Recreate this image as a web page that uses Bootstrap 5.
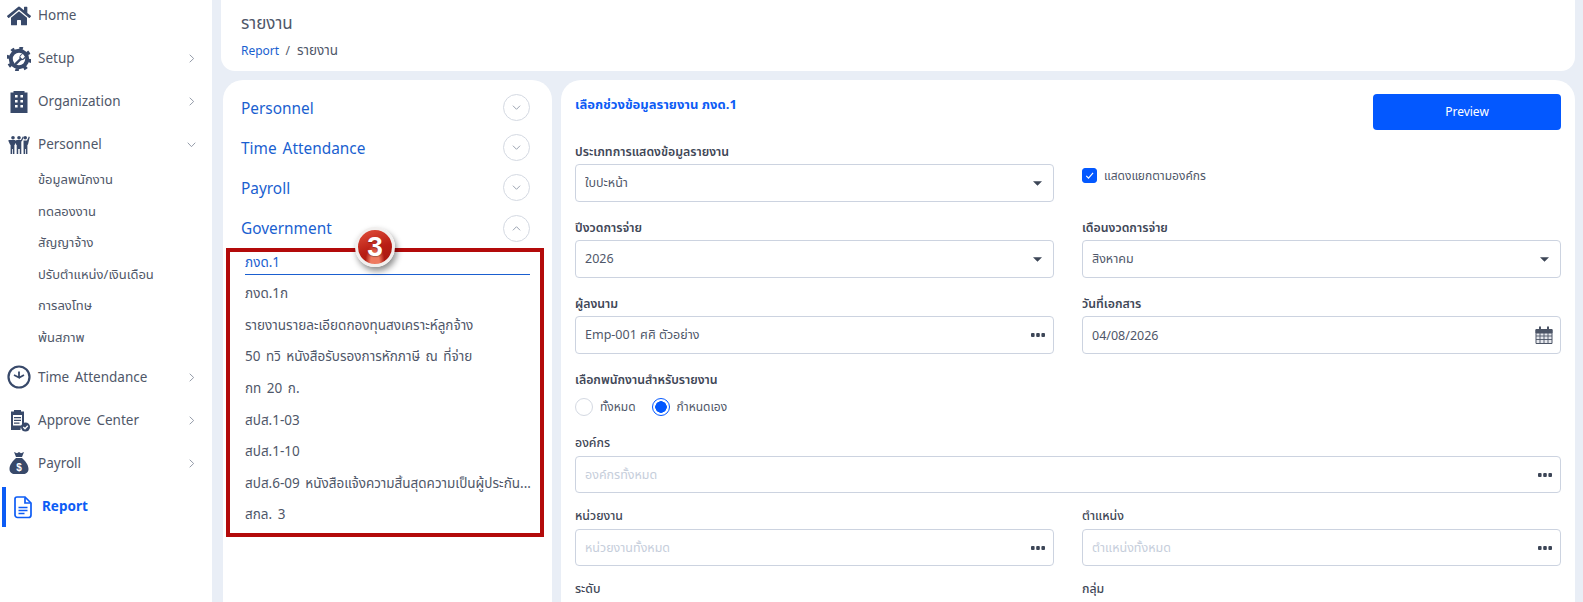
<!DOCTYPE html><html lang="th">
<head>
  <meta charset="UTF-8">
  <meta name="viewport" content="width=device-width, initial-scale=1.0">
  <title>Report</title>
  <link href="https://cdn.jsdelivr.net/npm/bootstrap@5.3.0/dist/css/bootstrap.min.css" rel="stylesheet">
  <style>
    html, body { height: 602px; overflow: hidden; }
    body { background-color: #e9eef6; font-family: "Noto Sans", "Noto Sans Thai", "Noto Sans CJK SC", sans-serif; color: #4f5769; font-size: 13px; }
    .app-shell { height: 602px; }
    .side-bar { width: 212px; flex: none; background: #fff; }
    .side-list { margin-top: -6px; }
    .side-row { height: 43px; padding-left: 7px; padding-right: 16px; color: #4f5769; text-decoration: none; font-size: 13.5px; word-spacing: 2px; }
    .side-ico { width: 24px; height: 24px; flex: none; margin-right: 7px; fill: #38496a; }
    .side-sub { height: 31.6px; padding-left: 38px; font-size: 13px; color: #4f5769; text-decoration: none; }
    .side-sub-first { margin-top: -2px; }
    .side-sub-last { margin-bottom: 2px; }
    .side-chev { margin-left: auto; width: 9px; height: 9px; fill: none; stroke: #8a92a0; stroke-width: 1; }
    .side-active { height: 40px; margin-top: 2px; margin-left: 2px; border-left: 4px solid #0d5cf5; padding-left: 6px; color: #0d5cf5; font-weight: 700; }
    .side-active .side-ico { fill: none; stroke: #0d5cf5; stroke-width: 1.7; margin-right: 8px; width: 22px; }
    .main-col { padding: 0 8px 0 9px; min-width: 0; }
    .head-box { height: 71px; background: #fff; border-radius: 0 0 14px 14px; padding: 11px 20px 0 20px; margin-bottom: 9px; }
    .head-title { font-size: 17px; line-height: 24px; color: #4f5769; }
    .head-crumb { font-size: 12px; line-height: 18px; margin-top: 6px; }
    .head-crumb a { color: #1a5fd0; text-decoration: none; }
    .crumb-now { font-size: 13.5px; margin-left: 4px; }
    .panel-left { width: 329px; flex: none; margin-left: 2px; background: #fff; border-radius: 20px 20px 0 0; padding: 7px 8px 0 3px; }
    .panel-right { flex: 1; min-width: 0; margin-left: 9px; background: #fff; border-radius: 20px 20px 0 0; padding: 14px 14px 0 14px; }
    .group-row { height: 40.3px; padding: 0 14px 0 15px; color: #1a5fd0; font-size: 15.4px; word-spacing: 2px; }
    .group-name { padding-top: 2px; }
    .group-circle { width: 27px; height: 27px; border: 1px solid #d4d9e2; border-radius: 50%; }
    .group-circle svg { width: 9px; height: 9px; fill: none; stroke: #9aa2b0; stroke-width: 1.1; }
    .report-box { border: 4px solid #b30a0a; height: 289px; padding: 0 10px 0 15px; }
    .report-item { height: 31.6px; font-size: 13.5px; color: #4f5769; word-spacing: 2px; white-space: nowrap; line-height: 29px; }
    .report-item.is-on { color: #1a5fd0; border-bottom: 1px solid #1a5fd0; height: 23px; line-height: 20px; margin-bottom: 4px; }
    .step-badge { position: absolute; top: -25px; left: 125px; width: 40px; height: 40px; border-radius: 50%; background: radial-gradient(ellipse at 50% 95%, #ee7a60 0 18%, transparent 40%), linear-gradient(160deg, #e2503c, #b81d14 55%, #a3170f); border: 3px solid #f1efee; box-shadow: 2px 4px 6px rgba(0,0,0,.45); color: #fff; font: 700 28px/33px "Liberation Sans", sans-serif; text-align: center; text-shadow: 0 1px 1px rgba(0,0,0,.3); }
    .title-blue { color: #0d5cf5; font-weight: 700; font-size: 13px; margin: 1px 0 0; }
    .btn-preview { width: 188px; height: 36px; background: #0358ff; border-radius: 4px; border: 0; color: #fff; font-size: 12px; }
    .form-rows { --bs-gutter-x: 28px; --bs-gutter-y: 0; }
    .field-label { display: block; font-size: 12.3px; font-weight: 600; line-height: 16px; margin-bottom: 4px; color: #3f4757; }
    .field-gap { margin-bottom: 18px; }
    .field-gap-slim { margin-bottom: 15px; }
    .field-box, .field-pick { height: 38px; border: 1px solid #ccd3e0; border-radius: 4px; font-size: 12.5px; color: #4f5769; padding: 0 9px; box-shadow: none; }
    .field-box { background-image: url("data:image/svg+xml,%3Csvg xmlns='http://www.w3.org/2000/svg' viewBox='0 0 10 5'%3E%3Cpath d='M0 0h10L5 5z' fill='%233d4657'/%3E%3C/svg%3E"); background-size: 9px 5px; background-position: right 11px center; }
    .field-pick::placeholder { color: #c6cedb; opacity: 1; }
    .pick-slim { height: 37px; }
    .pick-dots { position: absolute; right: 9px; top: 50%; transform: translateY(-50%); width: 14px; height: 4px; fill: #3d4657; }
    .pick-cal { position: absolute; right: 8px; top: 50%; transform: translateY(-50%); width: 18px; height: 19px; fill: none; stroke: #4c5566; }
    .check-row { padding-top: 24px; font-size: 12px; }
    .check-blue { width: 15px; height: 15px; margin: 0 7px 0 0; border-radius: 3px; border-color: #0358ff; }
    .check-blue:checked { background-color: #0358ff; border-color: #0358ff; background-image: url("data:image/svg+xml,%3Csvg xmlns='http://www.w3.org/2000/svg' viewBox='0 0 20 20'%3E%3Cpath d='M5 10.500l3.500 3.500L15.500 6' fill='none' stroke='%23fff' stroke-width='1.800'/%3E%3C/svg%3E"); }
    .radio-mark { width: 18px; height: 18px; margin: 0 7px 0 0; border-color: #d4d9e2; }
    .radio-mark:checked { background-color: #fff; border-color: #0358ff; background-image: radial-gradient(circle, #0358ff 0 5.5px, transparent 6px); }
    .radio-row { font-size: 12px; margin-top: 9px; margin-bottom: 18px; height: 20px; }
    .org-label { font-weight: 500; margin-bottom: 5px; }
  </style>
</head>
<body>
  <div class="app-shell d-flex">
    <!-- side menu -->
    <aside class="side-bar">
      <nav class="side-list d-flex flex-column">
        <a class="side-row d-flex align-items-center" href="#">
          <svg class="side-ico" viewBox="0 0 576 512"><path d="M280.37 148.26L96 300.11V464a16 16 0 0 0 16 16l112.06-.29a16 16 0 0 0 15.92-16V368a16 16 0 0 1 16-16h64a16 16 0 0 1 16 16v95.64a16 16 0 0 0 16 16.05L464 480a16 16 0 0 0 16-16V300L295.67 148.26a12.19 12.19 0 0 0-15.3 0zM571.6 251.47L488 182.56V44.05a12 12 0 0 0-12-12h-56a12 12 0 0 0-12 12v72.61L318.47 43a48 48 0 0 0-61 0L4.34 251.47a12 12 0 0 0-1.6 16.9l25.5 31A12 12 0 0 0 45.15 301l235.22-193.74a12.19 12.19 0 0 1 15.3 0L530.9 301a12 12 0 0 0 16.9-1.6l25.5-31a12 12 0 0 0-1.7-16.93z"/></svg>
          Home
        </a>
        <a class="side-row d-flex align-items-center" href="#">
          <svg class="side-ico" viewBox="0 0 24 24"><circle cx="12" cy="12" r="8.2" fill="none" stroke="#38496a" stroke-width="4"/><circle cx="12" cy="12" r="11" fill="none" stroke="#38496a" stroke-width="3" stroke-dasharray="3.6 5.04"/><path d="M15.8 6.8l-2.6 2.6.9 1.6 1.6.9 2.6-2.6c.3 2-1.4 4.4-4.2 3.9l-4.2 4.4c-1.2 1.1-2.9-.5-1.8-1.8l4.4-4.2c-.6-2.7 1.6-4.7 3.3-4.8z" fill="#38496a"/></svg>
          Setup
          <svg class="side-chev" viewBox="0 0 10 10"><path d="M3 .8L7.4 5 3 9.2"/></svg>
        </a>
        <a class="side-row d-flex align-items-center" href="#">
          <svg class="side-ico" viewBox="0 0 24 24"><path d="M3.500 23V2.500h3V1h11v1.500h3V23z"/><path d="M8 5h2.600v2.600H8zM13.400 5H16v2.600h-2.600zM8 10h2.600v2.600H8zM13.400 10H16v2.600h-2.600zM8 15h2.600v2.600H8zM13.400 15H16v2.600h-2.600z" fill="#fff"/></svg>
          Organization
          <svg class="side-chev" viewBox="0 0 10 10"><path d="M3 .8L7.4 5 3 9.2"/></svg>
        </a>
        <a class="side-row d-flex align-items-center" href="#">
          <svg class="side-ico" viewBox="0 0 24 24"><path d="M4 7h4v4.500l-.6.5V21H5.900v-5h-.8v5H3.600v-9l-.6-.5-1.800-4 1-.5zM10 7h4l1.800-3.600 1 .5-1.800 4.100-.7.5V21h-1.500v-5h-1.600v5h-1.500v-9l-.7-.5L7.200 7.900l1-.5zM16.500 7.500H20l1.800-4 1 .5-1.800 7.500-.6.500V21h-1.500v-5h-.8v5h-1.500z"/><circle cx="6" cy="4.800" r="1.800"/><circle cx="12" cy="4.800" r="1.800"/><circle cx="18.200" cy="4.800" r="1.800"/></svg>
          Personnel
          <svg class="side-chev" viewBox="0 0 10 10"><path d="M.8 3L5 7.400 9.200 3"/></svg>
        </a>
        <a class="side-sub side-sub-first d-flex align-items-center" href="#">ข้อมูลพนักงาน</a>
        <a class="side-sub d-flex align-items-center" href="#">ทดลองงาน</a>
        <a class="side-sub d-flex align-items-center" href="#">สัญญาจ้าง</a>
        <a class="side-sub d-flex align-items-center" href="#">ปรับตำแหน่ง/เงินเดือน</a>
        <a class="side-sub d-flex align-items-center" href="#">การลงโทษ</a>
        <a class="side-sub side-sub-last d-flex align-items-center" href="#">พ้นสภาพ</a>
        <a class="side-row d-flex align-items-center" href="#">
          <svg class="side-ico" viewBox="0 0 24 24"><circle cx="12" cy="12" r="10.500" fill="none" stroke="#38496a" stroke-width="2.200"/><path d="M12 6.500V12.500L7 10M12.500 12.500L17 10" fill="none" stroke="#38496a" stroke-width="1.800"/></svg>
          Time Attendance
          <svg class="side-chev" viewBox="0 0 10 10"><path d="M3 .8L7.400 5 3 9.200"/></svg>
        </a>
        <a class="side-row d-flex align-items-center" href="#">
          <svg class="side-ico" viewBox="0 0 24 24"><path d="M4 3.500h3V2h7v1.500h3v12.800a6 6 0 0 0-3.500 5.700H4z"/><path d="M6 7h9v10.500H6z" fill="#fff"/><path d="M7 9h7v1.300H7zM7 11.700h7V13H7zM7 14.400h5.500v1.300H7z"/><circle cx="18.500" cy="19" r="4.500"/><path d="M16.300 19l1.700 1.700 2.800-3" fill="none" stroke="#fff" stroke-width="1.300"/></svg>
          Approve Center
          <svg class="side-chev" viewBox="0 0 10 10"><path d="M3 .8L7.400 5 3 9.200"/></svg>
        </a>
        <a class="side-row d-flex align-items-center" href="#">
          <svg class="side-ico" viewBox="0 0 24 24"><path d="M7 1l3 1.200L12 1l2 1.200L17 1l-2 5H9zM9 7h6c3.500 3 6.500 7 6.500 11 0 3.500-2.500 5-5 5h-9c-2.500 0-5-1.500-5-5C2.500 14 5.500 10 9 7z"/><text x="12" y="20" text-anchor="middle" font-family="Liberation Sans, sans-serif" font-size="10" font-weight="700" fill="#fff">$</text></svg>
          Payroll
          <svg class="side-chev" viewBox="0 0 10 10"><path d="M3 .8L7.400 5 3 9.200"/></svg>
        </a>
        <a class="side-row side-active d-flex align-items-center" href="#">
          <svg class="side-ico" viewBox="0 0 22 24"><path d="M5 2h8l6 6v12a2.500 2.500 0 0 1-2.500 2.500h-11A2.500 2.500 0 0 1 3 20V4a2 2 0 0 1 2-2z"/><path d="M13 2.500V8h5.500M6.500 12.500h9M6.500 15.500h9M6.500 18.500h6"/></svg>
          Report
        </a>
      </nav>
    </aside>

    <main class="main-col flex-grow-1">
      <div class="head-box">
        <div class="head-title">รายงาน</div>
        <div class="head-crumb"><a href="#">Report</a>&nbsp; / <span class="crumb-now">รายงาน</span></div>
      </div>

      <div class="d-flex">
        <!-- report groups -->
        <section class="panel-left" style="height:530px">
          <div class="group-row d-flex align-items-center justify-content-between"><span class="group-name">Personnel</span>
            <span class="group-circle d-flex align-items-center justify-content-center"><svg viewBox="0 0 10 10"><path d="M1 3l4 4 4-4"/></svg></span></div>
          <div class="group-row d-flex align-items-center justify-content-between"><span class="group-name">Time Attendance</span>
            <span class="group-circle d-flex align-items-center justify-content-center"><svg viewBox="0 0 10 10"><path d="M1 3l4 4 4-4"/></svg></span></div>
          <div class="group-row d-flex align-items-center justify-content-between"><span class="group-name">Payroll</span>
            <span class="group-circle d-flex align-items-center justify-content-center"><svg viewBox="0 0 10 10"><path d="M1 3l4 4 4-4"/></svg></span></div>
          <div class="group-row d-flex align-items-center justify-content-between"><span class="group-name">Government</span>
            <span class="group-circle d-flex align-items-center justify-content-center"><svg viewBox="0 0 10 10"><path d="M1 7l4-4 4 4"/></svg></span></div>
          <div class="report-box position-relative">
            <span class="step-badge">3</span>
            <div class="report-item is-on">ภงด.1</div>
            <div class="report-item">ภงด.1ก</div>
            <div class="report-item">รายงานรายละเอียดกองทุนสงเคราะห์ลูกจ้าง</div>
            <div class="report-item">50 ทวิ หนังสือรับรองการหักภาษี ณ ที่จ่าย</div>
            <div class="report-item">กท 20 ก.</div>
            <div class="report-item">สปส.1-03</div>
            <div class="report-item">สปส.1-10</div>
            <div class="report-item">สปส.6-09 หนังสือแจ้งความสิ้นสุดความเป็นผู้ประกัน...</div>
            <div class="report-item">สกล. 3</div>
          </div>
        </section>

        <!-- report form -->
        <section class="panel-right" style="height:530px">
          <div class="d-flex justify-content-between align-items-start" style="height:50px">
            <p class="title-blue">เลือกช่วงข้อมูลรายงาน ภงด.1</p>
            <button class="btn-preview" type="button">Preview</button>
          </div>
          <div class="row form-rows">
            <div class="col-6 field-gap">
              <label class="field-label">ประเภทการแสดงข้อมูลรายงาน</label>
              <select class="form-select field-box"><option>ใบปะหน้า</option></select>
            </div>
            <div class="col-6 field-gap d-flex align-items-start check-row">
              <input class="form-check-input check-blue" type="checkbox" checked>
              <span class="lh-sm">แสดงแยกตามองค์กร</span>
            </div>
            <div class="col-6 field-gap">
              <label class="field-label">ปีงวดการจ่าย</label>
              <select class="form-select field-box"><option>2026</option></select>
            </div>
            <div class="col-6 field-gap">
              <label class="field-label">เดือนงวดการจ่าย</label>
              <select class="form-select field-box"><option>สิงหาคม</option></select>
            </div>
            <div class="col-6 field-gap">
              <label class="field-label">ผู้ลงนาม</label>
              <div class="position-relative">
                <input class="form-control field-pick" value="Emp-001 ศศิ ตัวอย่าง">
                <svg class="pick-dots" viewBox="0 0 14 4"><rect width="3.600" height="4" rx="1"/><rect x="5.200" width="3.600" height="4" rx="1"/><rect x="10.400" width="3.600" height="4" rx="1"/></svg>
              </div>
            </div>
            <div class="col-6 field-gap">
              <label class="field-label">วันที่เอกสาร</label>
              <div class="position-relative">
                <input class="form-control field-pick" value="04/08/2026">
                <svg class="pick-cal" viewBox="0 0 18 19"><path d="M1 4h16v14H1z" fill="#e6e8ed"/><path d="M1 4h16v3.500H1z" fill="#4c5566"/><path d="M1 10.500h16M1 14h16M5 7.500V18M9 7.500V18M13 7.500V18" stroke-width=".9"/><path d="M5 1v4M13 1v4" stroke-width="2"/></svg>
              </div>
            </div>
            <div class="col-12">
              <label class="field-label">เลือกพนักงานสำหรับรายงาน</label>
              <div class="radio-row d-flex align-items-center">
                <input class="form-check-input radio-mark mt-0" type="radio" name="emp">
                <span class="me-3">ทั้งหมด</span>
                <input class="form-check-input radio-mark mt-0" type="radio" name="emp" checked>
                <span>กำหนดเอง</span>
              </div>
            </div>
            <div class="col-12 field-gap-slim">
              <label class="field-label org-label">องค์กร</label>
              <div class="position-relative">
                <input class="form-control field-pick pick-slim" placeholder="องค์กรทั้งหมด">
                <svg class="pick-dots" viewBox="0 0 14 4"><rect width="3.600" height="4" rx="1"/><rect x="5.200" width="3.600" height="4" rx="1"/><rect x="10.400" width="3.600" height="4" rx="1"/></svg>
              </div>
            </div>
            <div class="col-6 field-gap-slim">
              <label class="field-label org-label">หน่วยงาน</label>
              <div class="position-relative">
                <input class="form-control field-pick pick-slim" placeholder="หน่วยงานทั้งหมด">
                <svg class="pick-dots" viewBox="0 0 14 4"><rect width="3.600" height="4" rx="1"/><rect x="5.200" width="3.600" height="4" rx="1"/><rect x="10.400" width="3.600" height="4" rx="1"/></svg>
              </div>
            </div>
            <div class="col-6 field-gap-slim">
              <label class="field-label org-label">ตำแหน่ง</label>
              <div class="position-relative">
                <input class="form-control field-pick pick-slim" placeholder="ตำแหน่งทั้งหมด">
                <svg class="pick-dots" viewBox="0 0 14 4"><rect width="3.600" height="4" rx="1"/><rect x="5.200" width="3.600" height="4" rx="1"/><rect x="10.400" width="3.600" height="4" rx="1"/></svg>
              </div>
            </div>
            <div class="col-6"><label class="field-label org-label">ระดับ</label></div>
            <div class="col-6"><label class="field-label org-label">กลุ่ม</label></div>
          </div>
        </section>
      </div>
    </main>
  </div>
  <script src="https://cdn.jsdelivr.net/npm/bootstrap@5.3.0/dist/js/bootstrap.bundle.min.js"></script>
</body>
</html>
